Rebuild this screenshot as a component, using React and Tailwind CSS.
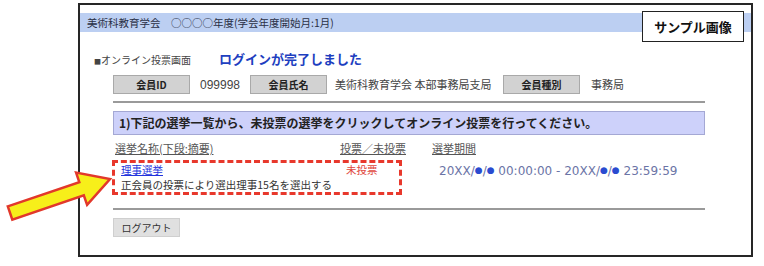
import React from 'react';

const jp = { fontFamily: '"Noto Sans CJK JP", "Noto Sans", sans-serif' };

function Arrow() {
  // yellow pointer arrow drawn over the frame edge
  return (
    <svg className="absolute left-0 top-0" width="130" height="240" viewBox="0 0 130 240">
      <polygon
        points="7.8,206.4 79.3,182.1 76.1,172.6 110,179 87.1,204.8 83.8,195.3 12.3,219.6"
        fill="#f7ef1a"
        stroke="#e2382b"
        strokeWidth="2.5"
        strokeLinejoin="miter"
      />
    </svg>
  );
}

function LabelBox({ children }) {
  return (
    <div className="w-[77px] h-[19px] flex items-center justify-center bg-[#d2d2d2] border border-[#a9a9a9] text-[10px] font-bold text-[#222]">
      {children}
    </div>
  );
}

function Dot() {
  return <span className="text-[#2a4bd0] text-[9px]">●</span>;
}

export default function App() {
  return (
    <div className="relative w-[764px] h-[266px] bg-white overflow-hidden" style={jp}>
      <div className="ml-[78px] mt-[3px] w-[675px] h-[254px] border-2 border-[#262626] relative">
        {/* header bar */}
        <div className="mt-[8px] h-[19px] bg-[#bccff2] flex items-center pl-[7px] text-[10.5px] text-[#2a2f45]">
          美術科教育学会　○○○○年度(学会年度開始月:1月)
        </div>

        <div className="absolute left-[562px] top-[6px] w-[102px] h-[31px] bg-white border border-[#222] flex items-center justify-center text-[13px] font-bold text-[#111]">
          サンプル画像
        </div>

        {/* title */}
        <div className="mt-[19px] h-[16px] flex items-center pl-[14px]">
          <span className="text-[10px] text-[#444] w-[125px]">
            <span className="text-[7px] align-middle">■</span>オンライン投票画面
          </span>
          <span className="text-[13px] font-bold text-[#1e3fc0]">ログインが完了しました</span>
        </div>

        <div className="pl-[33px]">
          {/* member info */}
          <div className="mt-[8px] h-[19px] flex items-center text-[11px] text-[#444]">
            <LabelBox>会員ID</LabelBox>
            <div className="w-[60px] pl-[10px] text-[12px]" style={{ fontFamily: '"Liberation Sans", sans-serif' }}>099998</div>
            <LabelBox>会員氏名</LabelBox>
            <div className="w-[176px] pl-[8px] text-[11px]">美術科教育学会 本部事務局支局</div>
            <LabelBox>会員種別</LabelBox>
            <div className="pl-[11px] text-[11px]">事務局</div>
          </div>

          <div className="mt-[7px] w-[592px] h-[2px] bg-[#9a9a9a]" />

          {/* instruction */}
          <div className="mt-[8px] w-[592px] h-[24px] bg-[#cdd1fa] border border-[#a4a8d4] flex items-center pl-[5px] text-[12px] font-bold text-[#222]">
            1)下記の選挙一覧から、未投票の選挙をクリックしてオンライン投票を行ってください。
          </div>

          {/* column headers */}
          <div className="mt-[6px] h-[14px] flex items-center text-[11px] text-[#555] underline">
            <span className="w-[227px] pl-[2px]">選挙名称(下段:摘要)</span>
            <span className="w-[92px]">投票／未投票</span>
            <span>選挙期間</span>
          </div>

          {/* election row */}
          <div className="mt-[5px] flex">
            <div className="w-[290px] h-[35px] -ml-px border-[3px] border-dashed border-[#e8382c] pl-[6px] flex flex-col">
              <div className="h-[14px] flex items-center">
                <span className="w-[225px] text-[10.5px] text-[#2233dd] underline">理事選挙</span>
                <span className="text-[10.5px] text-[#e0473d]">未投票</span>
              </div>
              <div className="h-[15px] flex items-center text-[10.5px] text-[#333]">
                正会員の投票により選出理事15名を選出する
              </div>
            </div>
            <div className="pl-[37px] mt-[4px] h-[14px] flex items-center text-[12px] text-[#6b74a6]" style={{ fontFamily: '"DejaVu Sans", sans-serif' }}>
              20XX/<Dot />/<Dot />&nbsp;00:00:00&nbsp;-&nbsp;20XX/<Dot />/<Dot />&nbsp;23:59:59
            </div>
          </div>

          <div className="mt-[13px] w-[592px] h-[2px] bg-[#9a9a9a]" />

          {/* logout */}
          <button className="mt-[8px] w-[67px] h-[19px] bg-[#e0e0e0] border border-[#cfcfcf] text-[10px] text-[#333] flex items-center justify-center">
            ログアウト
          </button>
        </div>
      </div>
      <Arrow />
    </div>
  );
}
